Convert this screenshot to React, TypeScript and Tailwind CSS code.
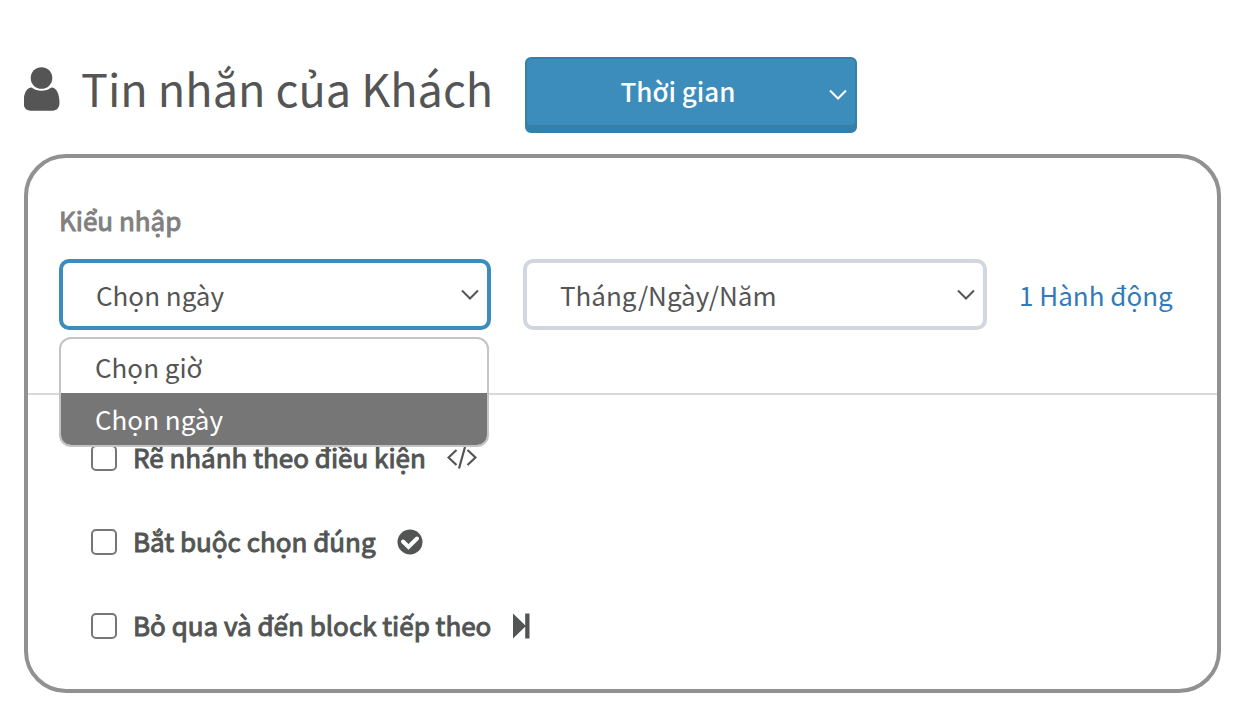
import React from 'react';
import clsx from 'clsx';

type ChevronProps = { className?: string };

const Chevron: React.FC<ChevronProps> = ({ className }) => (
  <svg viewBox="0 0 18 12" fill="none" stroke="currentColor" strokeWidth="2" className={clsx('h-3 w-[18px] pointer-events-none', className)} aria-hidden="true">
    <path d="M1 1.5 9 9.5 17 1.5" />
  </svg>
);

const UserIcon = () => (
  <svg viewBox="0 0 36 44" fill="currentColor" className="h-11 w-9" aria-hidden="true">
    <circle cx="17.500" cy="11" r="10.8" />
    <path d="M7.800 20.500C2 20.400 -0.500 28 -0.500 35.500C-0.500 40.500 2 43.700 6.500 43.700H28.500C33 43.700 35.500 40.500 35.500 35.500C35.500 28 33 20.400 27.200 20.500C24.500 22.600 21.300 23.700 17.500 23.700S10.500 22.600 7.800 20.500Z" />
  </svg>
);

const CodeIcon = () => (
  <svg viewBox="0 0 30 24" fill="none" stroke="currentColor" strokeWidth="2.2" className="h-6 w-[30px]" aria-hidden="true">
    <path d="M9.500 4 1.500 11.500 9.500 19M20.500 4 28.500 11.500 20.500 19M18 1 12 22.500" />
  </svg>
);

const CheckIcon = () => (
  <svg viewBox="0 0 26 26" className="size-[26px]" aria-hidden="true">
    <circle cx="13" cy="13" r="12.5" fill="currentColor" />
    <path d="M6 12.500 11.500 18 20 9.500" fill="none" stroke="white" strokeWidth="4" strokeLinecap="round" />
  </svg>
);

const SkipIcon = () => (
  <svg viewBox="0 0 18 26" fill="currentColor" className="h-[26px] w-[18px]" aria-hidden="true">
    <path d="M1 0.500 13.200 12.300V0.500H17.500V25.500H13.200V13.700L1 25.500Z" />
  </svg>
);

const options = [
  { id: 'branch', label: 'Rẽ nhánh theo điều kiện', icon: <CodeIcon /> },
  { id: 'required', label: 'Bắt buộc chọn đúng', icon: <CheckIcon /> },
  { id: 'skip', label: 'Bỏ qua và đến block tiếp theo', icon: <SkipIcon /> },
];

const inputTypes = ['Chọn giờ', 'Chọn ngày'];

const App: React.FC = () => {
  const [inputType, setInputType] = React.useState('Chọn ngày');

  return (
    <div className="min-h-screen bg-white px-6 pt-[57px] pb-7 font-['Noto_Sans_CJK_JP',sans-serif] text-[26px] text-[#555]">
      <header className="flex h-[76px] items-center">
        <div className="flex w-[501px] items-center gap-[21px] pb-3">
          <UserIcon />
          <h1 className="pb-0.5 text-[45px] leading-[60px] whitespace-nowrap">Tin nhắn của Khách</h1>
        </div>
        <button
          type="button"
          className="flex h-[76px] w-[332px] items-center rounded-md border-2 border-[#367fa9] bg-[#3c8dbc] px-2 pb-1 text-white shadow-[inset_0_-6px_0_#367fa9]"
        >
          <span className="flex-1 pr-2 pb-1.5 text-center font-medium">Thời gian</span>
          <Chevron className="mt-1" />
        </button>
      </header>

      <main className="mt-[21px] rounded-[42px] border-4 border-[#919191]">
        <section className="border-b-2 border-[#d9d9d9] px-[31px] pt-[42px] pb-[63px]">
          <label htmlFor="input-type" className="block h-[59px] leading-10 text-[#808080] [-webkit-text-stroke:1px]">
            Kiểu nhập
          </label>
          <div className="grid grid-cols-[432fr_464fr_167fr] items-center gap-8">
            <div className="relative">
              <select
                id="input-type"
                value={inputType}
                onChange={(e) => setInputType(e.target.value)}
                className="block h-[71px] w-full appearance-none rounded-[10px] border-4 border-[#3c8dbc] bg-white pr-12 pl-[33px] outline-none"
              >
                {inputTypes.map((type) => (
                  <option key={type}>{type}</option>
                ))}
              </select>
              <Chevron className="absolute top-[30px] right-3" />
              <div role="listbox" aria-label="Kiểu nhập" className="absolute top-full left-0 z-10 mt-[7px] w-[430px] max-w-full overflow-hidden rounded-xl border-2 border-[#c4c4c4] bg-white pt-0.5">
                {inputTypes.map((type) => (
                  <button
                    key={type}
                    type="button"
                    role="option"
                    aria-selected={type === inputType}
                    onClick={() => setInputType(type)}
                    className={clsx('block h-[52px] w-full px-[34px] text-left leading-[52px]', type === inputType && 'bg-[#767676] text-white')}
                  >
                    {type}
                  </button>
                ))}
              </div>
            </div>
            <div className="relative">
              <select
                aria-label="Định dạng"
                className="block h-[71px] w-full appearance-none rounded-[10px] border-4 border-[#d2d6de] bg-white pr-12 pl-[33px] outline-none"
              >
                <option>Tháng/Ngày/Năm</option>
              </select>
              <Chevron className="absolute top-[30px] right-3" />
            </div>
            <a href="#actions" className="whitespace-nowrap text-[#337ab7]">1 Hành động</a>
          </div>
        </section>

        <section className="space-y-11 px-[63px] pt-[43px] pb-[43px] text-[#525554]">
          {options.map((option) => (
            <div key={option.id} className="flex h-10 items-center">
              <input
                id={option.id}
                type="checkbox"
                className="size-[26px] appearance-none rounded-[5px] border-2 border-[#767676] bg-white checked:bg-[#3c8dbc]"
              />
              <label htmlFor={option.id} className="flex items-center gap-[21px] pl-4 leading-10 whitespace-nowrap">
                <span className="pb-0.5 [-webkit-text-stroke:1px]">{option.label}</span>
                {option.icon}
              </label>
            </div>
          ))}
        </section>
      </main>
    </div>
  );
};

export default App;
